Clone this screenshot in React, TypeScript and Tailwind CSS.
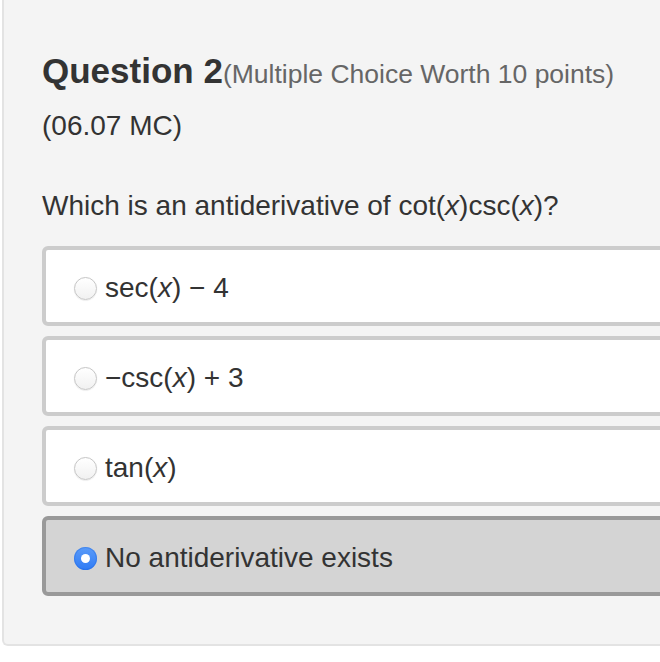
import React from "react";

const options: { label: React.ReactNode; selected?: boolean }[] = [
  { label: <>sec(<i>x</i>) − 4</> },
  { label: <>−csc(<i>x</i>) + 3</> },
  { label: <>tan(<i>x</i>)</> },
  { label: <>No antiderivative exists</>, selected: true },
];

function Radio({ selected }: { selected?: boolean }) {
  if (selected) {
    return (
      <span className="flex h-[23px] w-[23px] shrink-0 items-center justify-center rounded-full bg-gradient-to-b from-[#5a9bf8] to-[#2f7bf5] shadow-[inset_0_0_0_1px_rgba(30,100,220,0.35)]">
        <span className="h-[9px] w-[9px] rounded-full bg-white" />
      </span>
    );
  }
  return (
    <span className="h-[23px] w-[23px] shrink-0 rounded-full border border-[#c6c6c6] bg-gradient-to-b from-[#ffffff] to-[#f1f1f1] shadow-[0_0.5px_1px_rgba(0,0,0,0.12)]" />
  );
}

export default function App() {
  return (
    <div
      className="h-[662px] w-[660px] overflow-hidden bg-white text-[#333333]"
      style={{ fontFamily: '"Liberation Sans", Arial, Helvetica, sans-serif' }}
    >
      <div className="ml-[2px] w-[720px] rounded-bl-[6px] border-b-2 border-l-2 border-[#e3e3e3] bg-[#f4f4f4] pb-[48px] pl-[38px] pt-[51px]">
        <div className="flex h-[40px] items-baseline leading-[40px]">
          <span className="text-[35px] font-bold text-[#333333]">Question 2</span>
          <span className="text-[26.5px] text-[#666666]">(Multiple Choice Worth 10 points)</span>
        </div>
        <div className="mt-[19px] text-[28px] leading-[32px]">(06.07 MC)</div>
        <div className="mt-[48px] text-[28px] leading-[32px]">
          Which is an antiderivative of cot(<i>x</i>)csc(<i>x</i>)?
        </div>
        <div className="mt-[24px] flex flex-col gap-[10px]">
          {options.map((o, i) => (
            <div
              key={i}
              className={
                o.selected
                  ? "flex h-[80px] items-center gap-[8px] rounded-[6px] border-4 border-[#999999] bg-[#d4d4d4] pl-[28px] pt-[4px]"
                  : "flex h-[80px] items-center gap-[8px] rounded-[6px] border-4 border-[#cccccc] bg-white pl-[28px] pt-[4px]"
              }
            >
              <Radio selected={o.selected} />
              <span className="text-[28px] leading-[32px] text-[#333333]">{o.label}</span>
            </div>
          ))}
        </div>
      </div>
    </div>
  );
}
